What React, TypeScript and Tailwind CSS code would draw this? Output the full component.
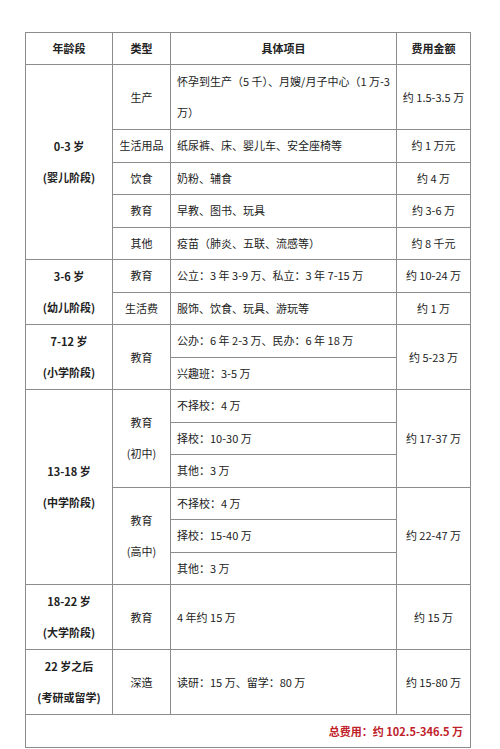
import React from 'react';

const td = 'border border-[#8c8c8c] p-0 leading-[31px]';
const ageCell = `${td} text-center font-bold`;
const typeCell = `${td} text-center`;
const itemCell = `${td} pl-[6px] text-left`;
const costCell = `${td} text-center`;

const Age: React.FC<{ top: string; sub: string }> = ({ top, sub }) => (
    <>
        <div>{top}</div>
        <div>{sub}</div>
    </>
);

const App: React.FC = () => {
    return (
        <div
            className="w-[500px] h-[749px] bg-white text-[#222] text-[11px] pt-[32px] pl-[25px]"
            style={{ fontFamily: '"Noto Sans CJK SC", "Liberation Sans", sans-serif' }}
        >
            <table className="table-fixed border-collapse w-[445px]">
                <colgroup>
                    <col className="w-[87px]" />
                    <col className="w-[58px]" />
                    <col className="w-[226px]" />
                    <col className="w-[74px]" />
                </colgroup>
                <tbody>
                    <tr className="h-[32px]">
                        <td className={`${td} text-center font-bold`}>年龄段</td>
                        <td className={`${td} text-center font-bold`}>类型</td>
                        <td className={`${td} text-center font-bold`}>具体项目</td>
                        <td className={`${td} text-center font-bold`}>费用金额</td>
                    </tr>

                    <tr className="h-[65px]">
                        <td rowSpan={5} className={ageCell}><Age top="0-3 岁" sub="(婴儿阶段)" /></td>
                        <td className={typeCell}>生产</td>
                        <td className={itemCell}>怀孕到生产（5 千）、月嫂/月子中心（1 万-3<br />万）</td>
                        <td className={costCell}>约 1.5-3.5 万</td>
                    </tr>
                    <tr className="h-[32.5px]">
                        <td className={typeCell}>生活用品</td>
                        <td className={itemCell}>纸尿裤、床、婴儿车、安全座椅等</td>
                        <td className={costCell}>约 1 万元</td>
                    </tr>
                    <tr className="h-[32.5px]">
                        <td className={typeCell}>饮食</td>
                        <td className={itemCell}>奶粉、辅食</td>
                        <td className={costCell}>约 4 万</td>
                    </tr>
                    <tr className="h-[32.5px]">
                        <td className={typeCell}>教育</td>
                        <td className={itemCell}>早教、图书、玩具</td>
                        <td className={costCell}>约 3-6 万</td>
                    </tr>
                    <tr className="h-[32.5px]">
                        <td className={typeCell}>其他</td>
                        <td className={itemCell}>疫苗（肺炎、五联、流感等）</td>
                        <td className={costCell}>约 8 千元</td>
                    </tr>

                    <tr className="h-[32.5px]">
                        <td rowSpan={2} className={ageCell}><Age top="3-6 岁" sub="(幼儿阶段)" /></td>
                        <td className={typeCell}>教育</td>
                        <td className={itemCell}>公立：3 年 3-9 万、私立：3 年 7-15 万</td>
                        <td className={costCell}>约 10-24 万</td>
                    </tr>
                    <tr className="h-[32.5px]">
                        <td className={typeCell}>生活费</td>
                        <td className={itemCell}>服饰、饮食、玩具、游玩等</td>
                        <td className={costCell}>约 1 万</td>
                    </tr>

                    <tr className="h-[32.5px]">
                        <td rowSpan={2} className={ageCell}><Age top="7-12 岁" sub="(小学阶段)" /></td>
                        <td rowSpan={2} className={typeCell}>教育</td>
                        <td className={itemCell}>公办：6 年 2-3 万、民办：6 年 18 万</td>
                        <td rowSpan={2} className={costCell}>约 5-23 万</td>
                    </tr>
                    <tr className="h-[32.5px]">
                        <td className={itemCell}>兴趣班：3-5 万</td>
                    </tr>

                    <tr className="h-[32.5px]">
                        <td rowSpan={6} className={ageCell}><Age top="13-18 岁" sub="(中学阶段)" /></td>
                        <td rowSpan={3} className={typeCell}><Age top="教育" sub="(初中)" /></td>
                        <td className={itemCell}>不择校：4 万</td>
                        <td rowSpan={3} className={costCell}>约 17-37 万</td>
                    </tr>
                    <tr className="h-[32.5px]">
                        <td className={itemCell}>择校：10-30 万</td>
                    </tr>
                    <tr className="h-[32.5px]">
                        <td className={itemCell}>其他：3 万</td>
                    </tr>
                    <tr className="h-[32.5px]">
                        <td rowSpan={3} className={typeCell}><Age top="教育" sub="(高中)" /></td>
                        <td className={itemCell}>不择校：4 万</td>
                        <td rowSpan={3} className={costCell}>约 22-47 万</td>
                    </tr>
                    <tr className="h-[32.5px]">
                        <td className={itemCell}>择校：15-40 万</td>
                    </tr>
                    <tr className="h-[32.5px]">
                        <td className={itemCell}>其他：3 万</td>
                    </tr>

                    <tr className="h-[65px]">
                        <td className={ageCell}><Age top="18-22 岁" sub="(大学阶段)" /></td>
                        <td className={typeCell}>教育</td>
                        <td className={itemCell}>4 年约 15 万</td>
                        <td className={costCell}>约 15 万</td>
                    </tr>
                    <tr className="h-[65px]">
                        <td className={ageCell}><Age top="22 岁之后" sub="(考研或留学)" /></td>
                        <td className={typeCell}>深造</td>
                        <td className={itemCell}>读研：15 万、留学：80 万</td>
                        <td className={costCell}>约 15-80 万</td>
                    </tr>

                    <tr className="h-[33px]">
                        <td colSpan={4} className={`${td} text-right pr-[7px] font-bold text-[#c0202a]`}>
                            总费用：约 102.5-346.5 万
                        </td>
                    </tr>
                </tbody>
            </table>
        </div>
    );
};

export default App;
